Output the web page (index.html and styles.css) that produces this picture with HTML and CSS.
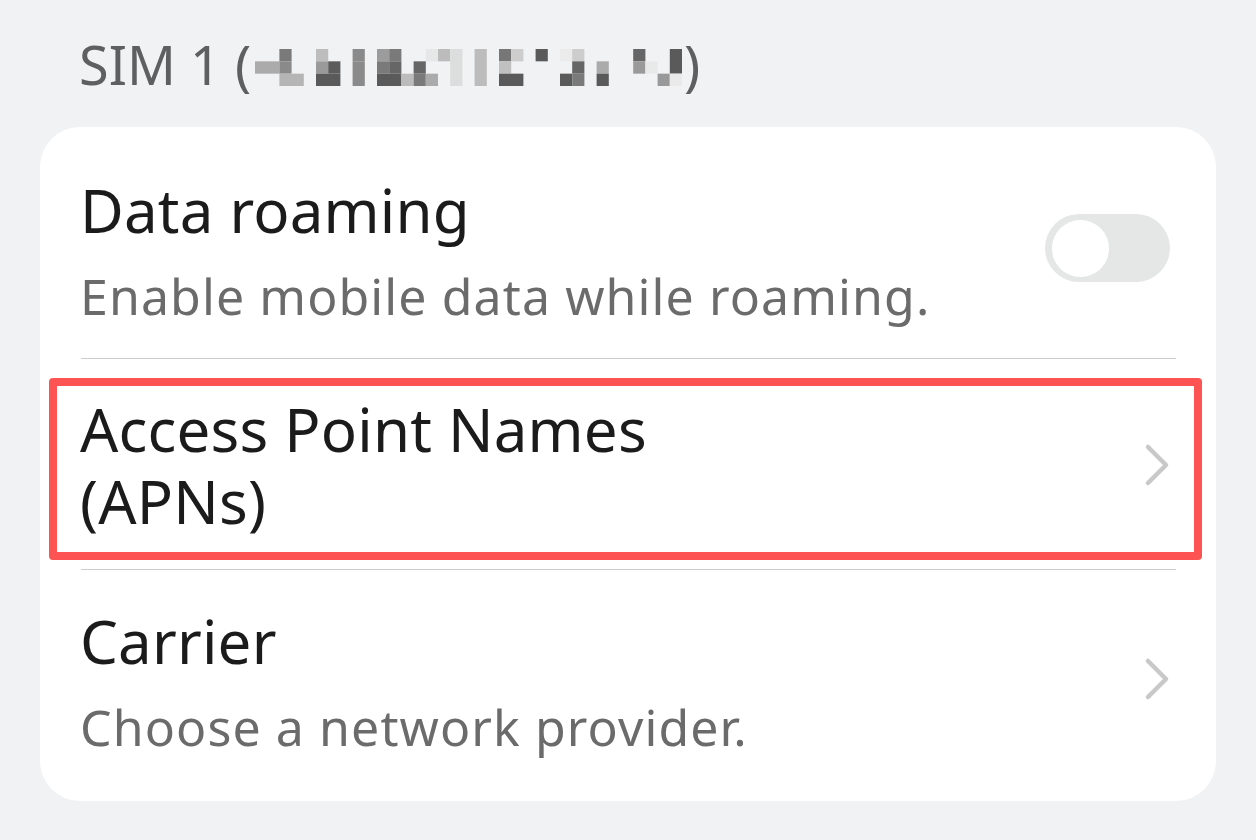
FILE: index.html
```html
<!DOCTYPE html>
<html lang="en">
<head>
<meta charset="utf-8">
<title>SIM 1</title>
<link rel="stylesheet" href="styles.css">
</head>
<body>
<div class="page">
  <div class="section-title">SIM 1 (<svg class="mosaic" viewBox="0 0 35 3" preserveAspectRatio="none" aria-hidden="true">
      <rect x="2" y="0" width="1" height="1" fill="#7a7a7a"/>
      <rect x="5" y="0" width="1" height="1" fill="#bdbdbd"/>
      <rect x="8" y="0" width="1" height="1" fill="#8a8a8a"/>
      <rect x="10" y="0" width="1" height="1" fill="#9c9c9c"/>
      <rect x="11" y="0" width="1" height="1" fill="#7a7a7a"/>
      <rect x="14" y="0" width="1" height="1" fill="#e6e7e7"/>
      <rect x="15" y="0" width="1" height="1" fill="#bcbcbd"/>
      <rect x="16" y="0" width="1" height="3" fill="#dcdddd"/>
      <rect x="18" y="0" width="1" height="3" fill="#bcbcbd"/>
      <rect x="20" y="0" width="1" height="1" fill="#777777"/>
      <rect x="21" y="0" width="1" height="1" fill="#cdcdcd"/>
      <rect x="23" y="0" width="1" height="1" fill="#5a5a5a"/>
      <rect x="25" y="0" width="1" height="1" fill="#ebebeb"/>
      <rect x="26" y="0" width="1" height="1" fill="#cdcdcd"/>
      <rect x="31" y="0" width="1" height="1" fill="#666666"/>
      <rect x="34" y="0" width="1" height="2" fill="#5a5a5a"/>
      <rect x="0" y="1" width="2" height="1" fill="#ababab"/>
      <rect x="2" y="1" width="1" height="1" fill="#8a8a8a"/>
      <rect x="5" y="1" width="1" height="1" fill="#9a9a9a"/>
      <rect x="6" y="1" width="1" height="1" fill="#5c5c5c"/>
      <rect x="8" y="1" width="1" height="2" fill="#8a8a8a"/>
      <rect x="10" y="1" width="1" height="1" fill="#7a7a7a"/>
      <rect x="11" y="1" width="1" height="1" fill="#666666"/>
      <rect x="13" y="1" width="1" height="1" fill="#666666"/>
      <rect x="20" y="1" width="1" height="1" fill="#c0c0c0"/>
      <rect x="26" y="1" width="1" height="1" fill="#666666"/>
      <rect x="28" y="1" width="1" height="1" fill="#ababab"/>
      <rect x="31" y="1" width="1" height="1" fill="#9a9a9a"/>
      <rect x="32" y="1" width="1" height="1" fill="#e8e9e9"/>
      <rect x="2" y="2" width="2" height="1" fill="#b5b5b5"/>
      <rect x="5" y="2" width="2" height="1" fill="#5a5a5a"/>
      <rect x="10" y="2" width="2" height="1" fill="#5a5a5a"/>
      <rect x="12" y="2" width="1" height="1" fill="#bcbcbd"/>
      <rect x="13" y="2" width="1" height="1" fill="#7a7a7a"/>
      <rect x="14" y="2" width="1" height="1" fill="#ababab"/>
      <rect x="20" y="2" width="2" height="1" fill="#5a5a5a"/>
      <rect x="25" y="2" width="1" height="1" fill="#5a5a5a"/>
      <rect x="26" y="2" width="1" height="1" fill="#7a7a7a"/>
      <rect x="28" y="2" width="1" height="1" fill="#5a5a5a"/>
      <rect x="33" y="2" width="1" height="1" fill="#999999"/>
      <rect x="34" y="2" width="1" height="1" fill="#eaeaea"/>
    </svg>)</div>

  <div class="card">
    <div class="row row-roaming">
      <div class="row-text">
        <div class="row-title">Data roaming</div>
        <div class="row-sub">Enable mobile data while roaming.</div>
      </div>
      <div class="toggle"><span class="knob"></span></div>
    </div>

    <div class="divider"></div>

    <div class="row row-apn">
      <div class="row-text">
        <div class="row-title">Access Point Names</div>
        <div class="row-title">(APNs)</div>
      </div>
      <svg class="chev" viewBox="0 0 26 44" aria-hidden="true"><polyline points="4,4 22,22 4,40" fill="none" stroke="#c8c8c8" stroke-width="4.5" stroke-linecap="round" stroke-linejoin="round"/></svg>
      <div class="highlight"></div>
    </div>

    <div class="divider"></div>

    <div class="row row-carrier">
      <div class="row-text">
        <div class="row-title">Carrier</div>
        <div class="row-sub">Choose a network provider.</div>
      </div>
      <svg class="chev chev-up" viewBox="0 0 26 44" aria-hidden="true"><polyline points="4,4 22,22 4,40" fill="none" stroke="#c8c8c8" stroke-width="4.5" stroke-linecap="round" stroke-linejoin="round"/></svg>
    </div>
  </div>
</div>
</body>
</html>
```

FILE: styles.css
```css
* { box-sizing: border-box; }

html, body {
  margin: 0;
  padding: 0;
}

body {
  background: #f1f2f4;
  font-family: "Noto Sans", "Liberation Sans", sans-serif;
  width: 1256px;
  height: 840px;
  overflow: hidden;
}

.page {
  padding-top: 32px;
}

.section-title {
  padding-left: 79px;
  font-size: 54px;
  line-height: 64px;
  color: #5e5f60;
  white-space: nowrap;
}

.mosaic {
  display: inline-block;
  width: 427px;
  height: 37px;
  vertical-align: -1px;
  margin-left: 4px;
  margin-right: 2px;
}

.card {
  margin: 31px 40px 0 40px;
  background: #ffffff;
  border-radius: 40px;
  padding: 0 40px;
}

.row {
  position: relative;
  display: flex;
  align-items: center;
  justify-content: space-between;
}

.row-text {
  flex: 1;
}

.row-title {
  font-size: 60px;
  line-height: 72px;
  color: #1b1b1b;
  letter-spacing: 0.2px;
}

.row-sub {
  margin-top: 14px;
  font-size: 50px;
  line-height: 72px;
  letter-spacing: 1.1px;
  color: #6b6b6b;
}

.row-roaming {
  padding: 47px 0 26px 0;
  align-items: flex-start;
}

.row-apn {
  padding: 34px 0 32px 0;
}

.row-carrier {
  padding: 35px 0 38px 0;
}

.divider {
  height: 1px;
  background: #cdcdcd;
  margin-left: 1px;
}

.toggle {
  margin-top: 40px;
  margin-right: 6px;
  width: 125px;
  height: 68px;
  border-radius: 34px;
  background: #e5e6e6;
  display: flex;
  align-items: center;
  padding-left: 7px;
}

.knob {
  width: 57px;
  height: 57px;
  border-radius: 50%;
  background: #ffffff;
}

.chev {
  width: 26px;
  height: 44px;
  margin-right: 6px;
}

.chev-up {
  margin-bottom: 11px;
}

.highlight {
  position: absolute;
  left: -31px;
  right: -26px;
  top: 19px;
  bottom: 9px;
  border: 8px solid #fd5353;
  border-radius: 4px;
  pointer-events: none;
}
```
